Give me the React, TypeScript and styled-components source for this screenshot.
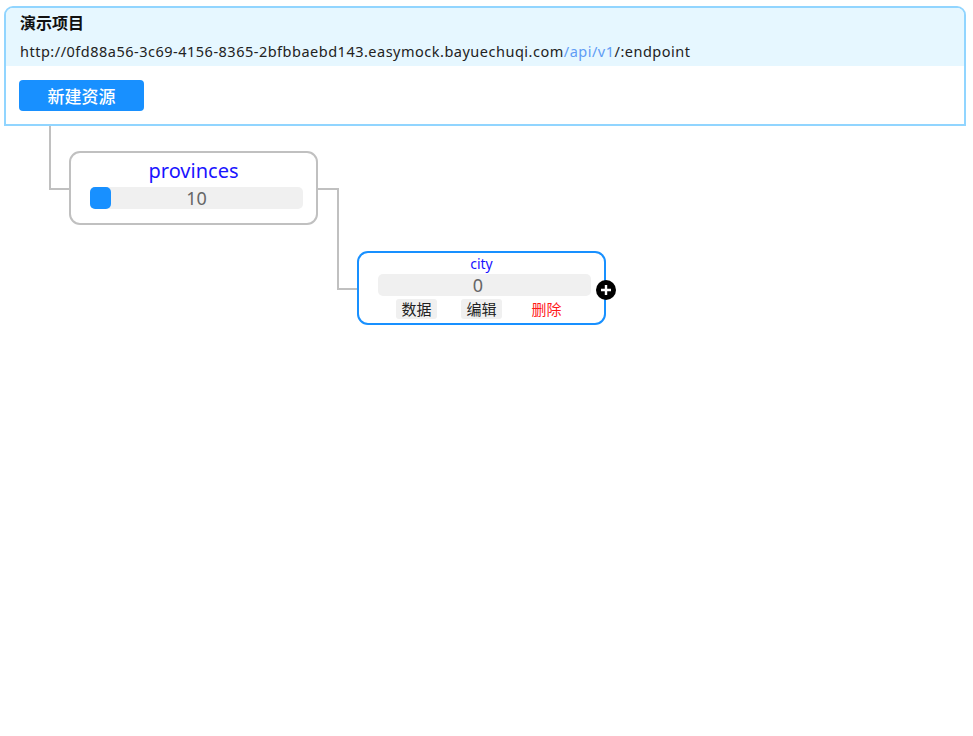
import React from "react";
import styled, { createGlobalStyle } from "styled-components";

const GlobalStyle = createGlobalStyle`
  html, body { margin: 0; padding: 0; background: #fff; }
  body {
    font-family: "Noto Sans", "Noto Sans CJK SC", sans-serif;
    color: #222;
  }
`;

const Page = styled.div`
  display: flex;
  flex-direction: column;
  min-height: 736px;
`;

const ProjectCard = styled.section`
  margin: 6px 7px 0 4px;
  border: 2px solid #91d5ff;
  border-radius: 9px 9px 0 0;
  background: #fff;
  overflow: hidden;
`;

const ProjectHead = styled.div`
  background: #e6f7ff;
  padding: 0 14px;
  height: 58px;
  display: flex;
  flex-direction: column;
`;

const ProjectTitle = styled.div`
  font-family: "Noto Sans CJK SC", sans-serif;
  font-weight: 700;
  font-size: 16px;
  line-height: 29px;
  color: #111;
`;

const ProjectUrl = styled.div`
  font-size: 14.5px;
  letter-spacing: 0.5px;
  line-height: 29px;
  color: #222;
  white-space: nowrap;
`;

const UrlPart = styled.span<{ $accent?: boolean }>`
  color: ${(p) => (p.$accent ? "#5f9cf5" : "#222")};
`;

const ProjectBody = styled.div`
  padding: 14px 13px 13px;
`;

const PrimaryButton = styled.button`
  width: 125px;
  height: 31px;
  border: none;
  border-radius: 4px;
  background: #1890ff;
  color: #fff;
  font-family: "Noto Sans CJK SC", sans-serif;
  font-weight: 500;
  font-size: 17px;
  padding: 0;
  cursor: pointer;
`;

const Canvas = styled.div`
  position: relative;
  flex: 1;
`;

const Links = styled.svg`
  position: absolute;
  left: 0;
  top: 0;
  overflow: visible;
`;

const Node = styled.div<{ $active?: boolean }>`
  position: absolute;
  box-sizing: border-box;
  width: 249px;
  height: 74px;
  border: 2px solid ${(p) => (p.$active ? "#1890ff" : "#c0c0c0")};
  border-radius: 11px;
  background: #fff;
  display: flex;
  flex-direction: column;
  align-items: flex-start;
`;

const NodeTitle = styled.div<{ $big?: boolean }>`
  align-self: stretch;
  text-align: center;
  color: #1a14ff;
  font-size: ${(p) => (p.$big ? "20px" : "14px")};
  line-height: ${(p) => (p.$big ? "35px" : "21px")};
  margin-bottom: ${(p) => (p.$big ? "-1px" : "0")};
`;

const CountBar = styled.div<{ $inset?: boolean }>`
  position: relative;
  box-sizing: border-box;
  margin-left: 19px;
  width: 213px;
  height: 22px;
  padding-right: ${(p) => (p.$inset ? "13px" : "0")};
  border-radius: 5px;
  background: #f0f0f0;
  color: #666;
  font-size: 18px;
  line-height: 22px;
  text-align: center;
`;

const CountFill = styled.div`
  position: absolute;
  left: 0;
  top: 0;
  height: 100%;
  border-radius: 5px;
  background: #1890ff;
`;

const CountText = styled.span`
  position: relative;
`;

const Actions = styled.div`
  align-self: stretch;
  margin-top: 3px;
  display: grid;
  grid-template-columns: repeat(3, 65px);
  justify-content: center;
  justify-items: center;
`;

const ActionButton = styled.span<{ $danger?: boolean }>`
  font-family: "Noto Sans CJK SC", sans-serif;
  font-size: 15px;
  line-height: 20px;
  padding: 0 5px;
  border-radius: 3px;
  color: ${(p) => (p.$danger ? "#ff1a1a" : "#222")};
  background: ${(p) => (p.$danger ? "transparent" : "#f0f0f0")};
`;

const AddHandle = styled.div`
  position: absolute;
  right: -12px;
  top: 27px;
  width: 20px;
  height: 20px;
  border-radius: 50%;
  background: #000;
  display: flex;
  align-items: center;
  justify-content: center;
`;

type TreeNode = {
  name: string;
  count: number;
  x: number;
  y: number;
  active?: boolean;
  fill?: number;
};

const nodes: TreeNode[] = [
  { name: "provinces", count: 10, x: 69, y: 25, fill: 21 },
  { name: "city", count: 0, x: 357, y: 125, active: true },
];

export default function App() {
  return (
    <>
      <GlobalStyle />
      <Page>
        <ProjectCard>
          <ProjectHead>
            <ProjectTitle>演示项目</ProjectTitle>
            <ProjectUrl>
              <UrlPart>http://0fd88a56-3c69-4156-8365-2bfbbaebd143.easymock.bayuechuqi.com</UrlPart>
              <UrlPart $accent>/api/v1</UrlPart>
              <UrlPart>/:endpoint</UrlPart>
            </ProjectUrl>
          </ProjectHead>
          <ProjectBody>
            <PrimaryButton>新建资源</PrimaryButton>
          </ProjectBody>
        </ProjectCard>
        <Canvas>
          <Links width="620" height="220">
            <path d="M50 0 V63 H69" fill="none" stroke="#c0c0c0" strokeWidth="2" />
            <path d="M317 63 H338 V163 H357" fill="none" stroke="#c0c0c0" strokeWidth="2" />
          </Links>
          {nodes.map((n) => (
            <Node key={n.name} $active={n.active} style={{ left: n.x, top: n.y }}>
              <NodeTitle $big={!n.active}>{n.name}</NodeTitle>
              <CountBar $inset={n.active}>
                {n.fill ? <CountFill style={{ width: n.fill }} /> : null}
                <CountText>{n.count}</CountText>
              </CountBar>
              {n.active && (
                <>
                  <Actions>
                    <ActionButton>数据</ActionButton>
                    <ActionButton>编辑</ActionButton>
                    <ActionButton $danger>删除</ActionButton>
                  </Actions>
                  <AddHandle>
                    <svg width="12" height="12" viewBox="0 0 12 12">
                      <path d="M6 1 V11 M1 6 H11" stroke="#fff" strokeWidth="2.4" />
                    </svg>
                  </AddHandle>
                </>
              )}
            </Node>
          ))}
        </Canvas>
      </Page>
    </>
  );
}
